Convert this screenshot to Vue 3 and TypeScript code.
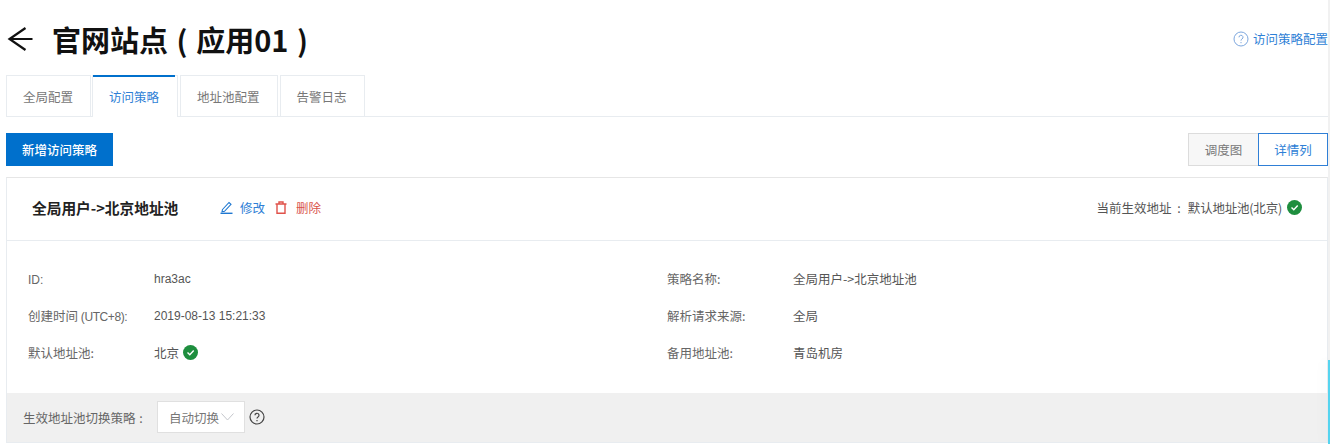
<script setup lang="ts">
interface Tab { label: string; active?: boolean }
const tabs: Tab[] = [
  { label: '全局配置' },
  { label: '访问策略', active: true },
  { label: '地址池配置' },
  { label: '告警日志' },
]
</script>

<template>
  <div class="page">
    <div class="main">
      <header class="head">
        <div class="title-wrap">
          <svg class="back" width="26" height="24" viewBox="0 0 26 24" fill="none" stroke="#111" stroke-width="2.200">
            <path d="M25.500 12H2.500M18.500 1 2.500 12l16 11" />
          </svg>
          <h1 class="title">官网站点 ( 应用01 )</h1>
        </div>
        <a class="help-link">
          <svg width="16" height="16" viewBox="0 0 16 16" fill="none" stroke="#7da7de" stroke-width="1">
            <circle cx="8" cy="8" r="7" />
            <path d="M6 6.300a2 2 0 1 1 3 1.700c-.7.400-1 .8-1 1.600" />
            <path d="M8 11v1.200" />
          </svg>
          <span>访问策略配置</span>
        </a>
      </header>

      <nav class="tabs">
        <div v-for="t in tabs" :key="t.label" class="tab" :class="{ active: t.active }">{{ t.label }}</div>
      </nav>

      <div class="toolbar">
        <button class="primary">新增访问策略</button>
        <div class="switch">
          <span class="sw">调度图</span>
          <span class="sw on">详情列</span>
        </div>
      </div>

      <section class="card">
        <div class="card-head">
          <div class="card-title">全局用户-&gt;北京地址池</div>
          <a class="act edit">
            <svg width="13" height="14" viewBox="0 0 13 14" fill="none" stroke="#1f78d1" stroke-width="1.100">
              <path d="M2.500 9.500 9 2.500l2 1.800-6.500 7-2.500.5z" />
              <path d="M.5 13.300h12" stroke-width="1.400" />
            </svg>
            <span>修改</span>
          </a>
          <a class="act del">
            <svg width="12" height="13" viewBox="0 0 12 13" fill="none" stroke="#e0524a" stroke-width="1.400">
              <path d="M.5 3h11M4 3V1h4v2M2 3v9.300h8V3" />
            </svg>
            <span>删除</span>
          </a>
          <div class="status">
            <span class="status-label">当前生效地址 :</span>
            <span class="status-value">默认地址池(北京)</span>
            <svg class="ok" width="15" height="15" viewBox="0 0 15 15">
              <circle cx="7.500" cy="7.500" r="7.500" fill="#1e8e3e" />
              <path d="M4.500 7.500 6.800 9.800 10.700 5.600" fill="none" stroke="#fff" stroke-width="1.400" />
            </svg>
          </div>
        </div>

        <div class="grid">
          <div class="row"><span class="k"><span class="latin">ID:</span></span><span class="v latin">hra3ac</span></div>
          <div class="row"><span class="k">策略名称:</span><span class="v">全局用户-&gt;北京地址池</span></div>
          <div class="row"><span class="k">创建时间 <span class="latin tight">(UTC+8):</span></span><span class="v latin">2019-08-13 15:21:33</span></div>
          <div class="row"><span class="k">解析请求来源:</span><span class="v">全局</span></div>
          <div class="row">
            <span class="k">默认地址池:</span>
            <span class="v with-icon">北京
              <svg width="15" height="15" viewBox="0 0 15 15">
                <circle cx="7.500" cy="7.500" r="7.500" fill="#1e8e3e" />
                <path d="M4.500 7.500 6.800 9.800 10.700 5.600" fill="none" stroke="#fff" stroke-width="1.400" />
              </svg>
            </span>
          </div>
          <div class="row"><span class="k">备用地址池:</span><span class="v">青岛机房</span></div>
        </div>

        <div class="foot">
          <span class="foot-label">生效地址池切换策略 :</span>
          <div class="select">
            <span>自动切换</span>
            <svg width="13" height="8" viewBox="0 0 13 8" fill="none" stroke="#c4c6cc" stroke-width="1">
              <path d="M.5.500 6.500 7l6-6.500" />
            </svg>
          </div>
          <svg class="q" width="16" height="16" viewBox="0 0 16 16" fill="none" stroke="#444" stroke-width="1.200">
            <circle cx="8" cy="8" r="7" />
            <path d="M6 6.300a2 2 0 1 1 3 1.700c-.7.400-1 .8-1 1.600" />
            <path d="M8 11v1.300" />
          </svg>
        </div>
      </section>
    </div>
    <div class="scroll"><div class="thumb"></div></div>
  </div>
</template>

<style>
html, body { margin: 0; background: #fff; overflow: hidden; }
</style>

<style scoped>
.page {
  display: flex;
  width: 1330px;
  height: 444px;
  overflow: hidden;
  font-family: "Noto Sans CJK SC", "Liberation Sans", sans-serif;
  font-size: 12.500px;
  color: #555;
  background: #fff;
}
.main { flex: 1; min-width: 0; padding-left: 6px; }
.scroll { width: 2px; display: flex; flex-direction: column; justify-content: flex-end; background: #f1f1f1; }
.thumb { height: 84px; background: #55d4ef; box-shadow: -3px 0 12px rgba(0, 0, 0, .08); }
.latin { font-family: "Liberation Sans", sans-serif; font-size: 12px; }
.tight { letter-spacing: -.4px; }
.head {
  height: 75px;
  display: flex;
  justify-content: space-between;
  align-items: flex-start;
}
.title-wrap { display: flex; align-items: center; padding-top: 19px; }
.back { margin-left: 1px; }
.title {
  margin: 0 0 0 19px;
  font-size: 29px;
  line-height: 40px;
  font-weight: 700;
  color: #111;
  word-spacing: 2px;
}
.help-link {
  display: flex;
  align-items: center;
  gap: 4px;
  margin-top: 31px;
  color: #2f7fd6;
  line-height: 16px;
}
.tabs {
  display: flex;
  height: 42px;
  box-sizing: border-box;
  border-bottom: 1px solid #e8ecf0;
}
.tab {
  box-sizing: border-box;
  height: 41px;
  padding: 0 17px 0 16px;
  margin-right: 2px;
  border: 1px solid #e8ecf0;
  border-bottom: 0;
  line-height: 41px;
  color: #777;
}
.tab:first-child { margin-right: 1px; }
.tab.active {
  position: relative;
  height: 42px;
  padding-right: 18px;
  color: #2f7fd6;
  background: #fff;
}
.tab.active::before {
  content: "";
  position: absolute;
  top: -1px;
  left: 0;
  right: 2px;
  height: 2px;
  background: #0070cc;
}
.toolbar {
  display: flex;
  justify-content: space-between;
  margin-top: 16px;
  height: 44px;
}
.primary {
  width: 107px;
  height: 33px;
  border: 0;
  padding: 0;
  background: #0070cc;
  color: #fff;
  font: inherit;
  font-weight: 500;
}
.switch { display: flex; height: 33px; }
.sw {
  box-sizing: border-box;
  width: 70px;
  height: 33px;
  line-height: 31px;
  text-align: center;
  border: 1px solid #dcdcdc;
  border-right: 0;
  background: #f7f7f7;
  color: #777;
}
.sw.on {
  border: 1px solid #2f7fd6;
  background: #fff;
  color: #2f7fd6;
}
.card {
  box-sizing: border-box;
  height: 266px;
  border: 1px solid #e8ecf0;
  border-top-color: #e6e6e6;
  display: flex;
  flex-direction: column;
}
.card-head {
  box-sizing: border-box;
  height: 63px;
  flex: none;
  display: flex;
  align-items: center;
  padding: 0 25px 4px;
  border-bottom: 1px solid #e8ecf0;
}
.card-title {
  width: 188px;
  font-size: 14.700px;
  font-weight: 700;
  color: #222;
}
.act { display: flex; align-items: center; gap: 7px; margin-right: 10px; }
.edit { color: #2f7fd6; }
.del { color: #d9534a; gap: 9px; }
.status { margin-left: auto; display: flex; align-items: center; gap: 5px; color: #555; }
.status-label { word-spacing: 3px; margin-right: 2px; }
.status-value { letter-spacing: -.2px; }
.grid {
  flex: 1;
  display: grid;
  grid-template-columns: 639px 1fr;
  grid-auto-rows: 37px;
  padding: 19px 0 0 21px;
}
.row { display: flex; align-items: center; }
.k { width: 126px; color: #666; }
.v { color: #555; }
.with-icon { display: flex; align-items: center; gap: 4px; }
.foot {
  box-sizing: border-box;
  height: 49px;
  flex: none;
  background: #f0f0f0;
  display: flex;
  align-items: center;
  padding: 0 0 1px 16px;
}
.foot-label { width: 134px; color: #666; word-spacing: 1px; }
.select {
  box-sizing: border-box;
  width: 88px;
  height: 32px;
  background: #fff;
  border: 1px solid #e0e0e0;
  display: flex;
  align-items: center;
  padding-left: 11px;
  gap: 2px;
  color: #777;
}
.q { margin-left: 4px; }
</style>
